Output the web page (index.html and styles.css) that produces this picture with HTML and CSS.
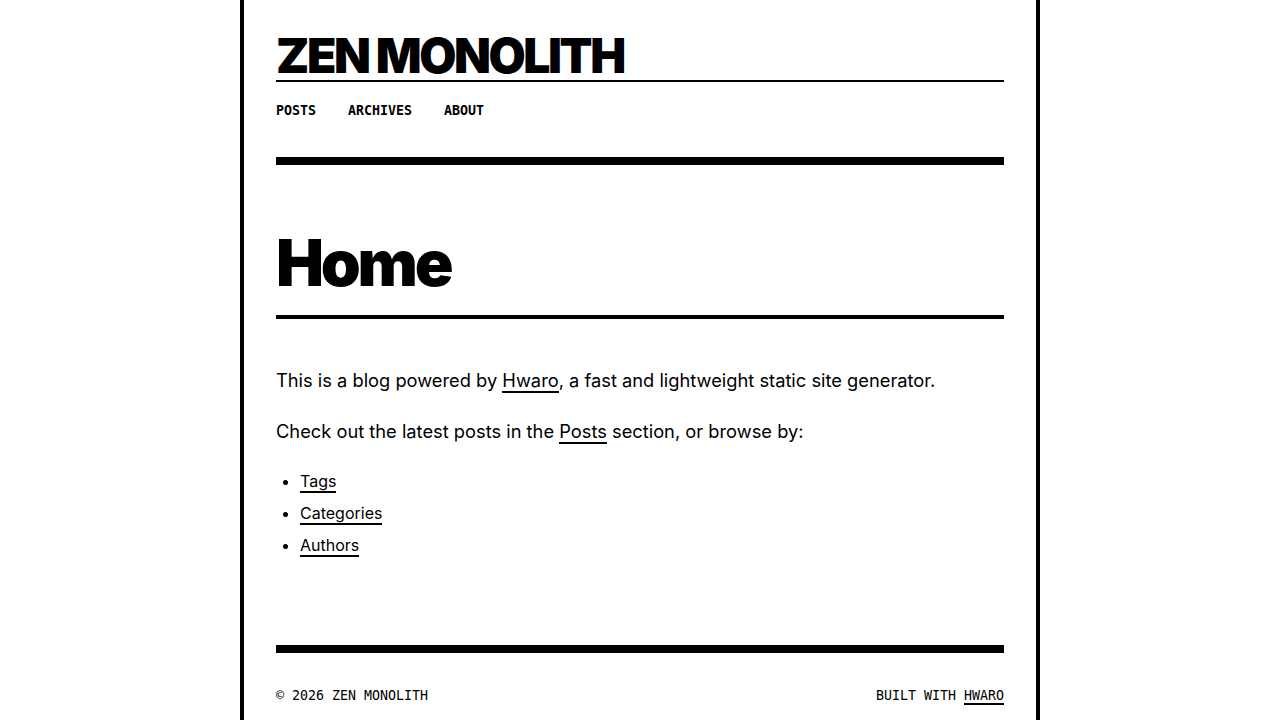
FILE: index.html
```html
<!DOCTYPE html>
<html lang="en">
<head>
<meta charset="utf-8">
<title>Home - Zen Monolith</title>
<link rel="stylesheet" href="styles.css">
</head>
<body>
<div class="page">
  <header class="site-header">
    <h1 class="site-title"><a href="#">ZEN MONOLITH</a></h1>
    <nav class="site-nav">
      <a href="#">Posts</a>
      <a href="#">Archives</a>
      <a href="#">About</a>
    </nav>
  </header>
  <main class="main">
    <h1 class="page-title">Home</h1>
    <div class="content">
      <p>This is a blog powered by <a class="ul" href="#">Hwaro</a>, a fast and lightweight static site generator.</p>
      <p class="last">Check out the latest posts in the <a class="ul" href="#">Posts</a> section, or browse by:</p>
      <ul>
        <li><a class="ul" href="#">Tags</a></li>
        <li><a class="ul" href="#">Categories</a></li>
        <li><a class="ul" href="#">Authors</a></li>
      </ul>
    </div>
  </main>
  <footer class="site-footer">
    <span>© 2026 ZEN MONOLITH</span>
    <span>BUILT WITH <a class="ul" href="#">HWARO</a></span>
  </footer>
</div>
</body>
</html>
```
FILE: styles.css
```css
* { box-sizing: border-box; }
html, body { margin: 0; padding: 0; background: #fff; color: #000; }
body { font-family: Inter, "Noto Sans", sans-serif; }
a { color: inherit; text-decoration: none; }

.page {
  width: 800px;
  margin: 0 auto;
  min-height: 100vh;
  border-left: 4px solid #000;
  border-right: 4px solid #000;
  padding: 32px 32px 32px;
}

.site-header {
  border-bottom: 8px solid #000;
  padding-bottom: 36px;
}
.site-title {
  margin: 0;
  font-size: 48px;
  line-height: 48px;
  font-weight: 900;
  letter-spacing: -0.05em;
  border-bottom: 2px solid #000;
}
.site-nav {
  display: flex;
  gap: 32px;
  margin-top: 19px;
  font-family: "DejaVu Sans Mono", "Liberation Mono", monospace;
  font-size: 13.3px;
  line-height: 20px;
  font-weight: 700;
  text-transform: uppercase;
}

.main { padding-top: 66px; }
.page-title {
  margin: 0;
  font-size: 64px;
  line-height: 64px;
  font-weight: 900;
  letter-spacing: -0.05em;
  padding-bottom: 20px;
  border-bottom: 4px solid #000;
}
.content {
  padding-top: 47px;
  font-size: 18.3px;
  line-height: 28.8px;
}
.content p { margin: 0 0 22px; }
.content p.last { margin-bottom: 19.5px; }
.content ul { margin: 0; padding-left: 24px; font-size: 16px; }
.content li { line-height: 32px; }
.ul { border-bottom: 2px solid #000; }

.site-footer {
  margin-top: 84px;
  border-top: 8px solid #000;
  padding-top: 33px;
  display: flex;
  justify-content: space-between;
  font-family: "DejaVu Sans Mono", "Liberation Mono", monospace;
  font-size: 13.3px;
  line-height: 20px;
}
```
